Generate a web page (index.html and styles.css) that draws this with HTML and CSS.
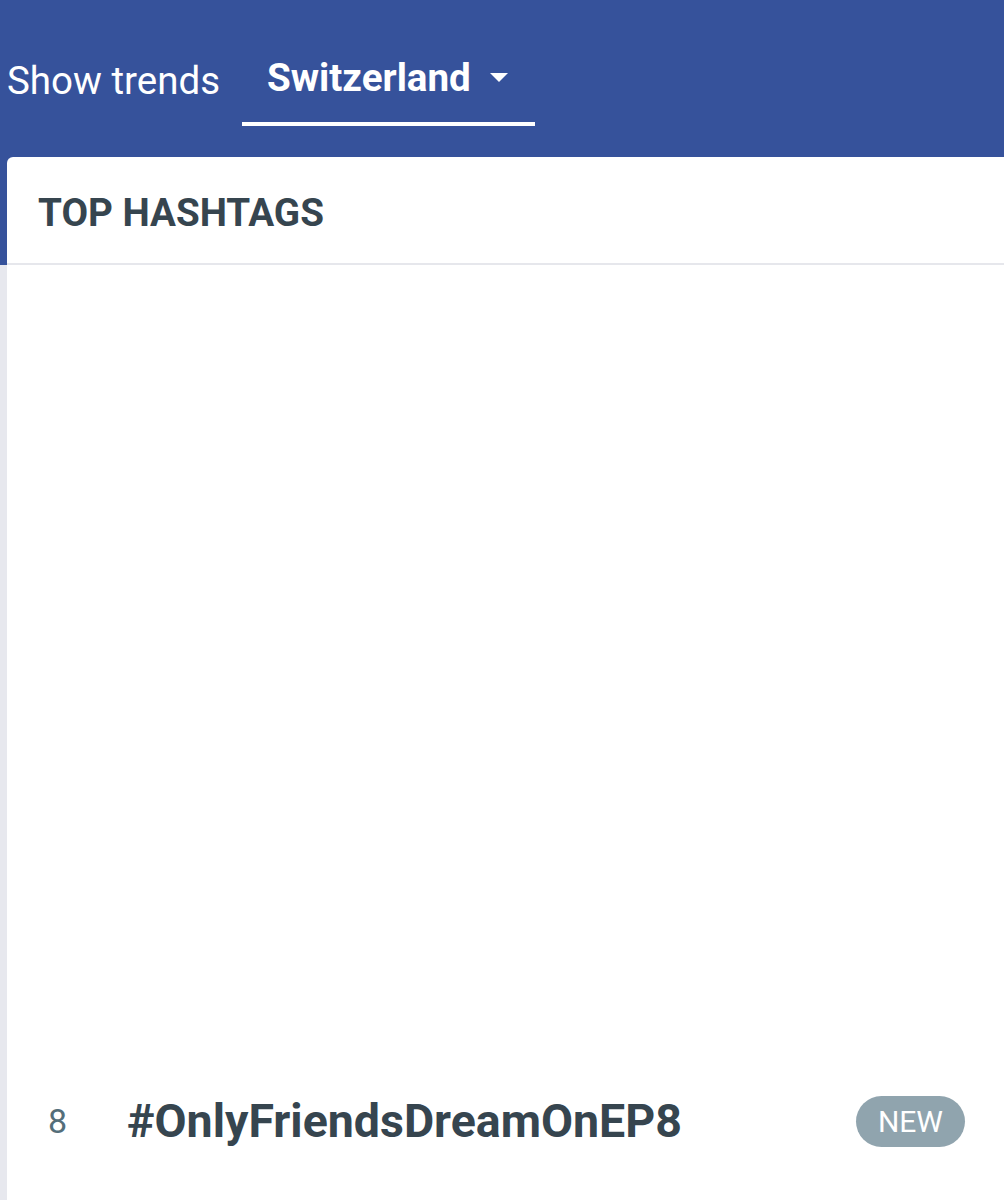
FILE: index.html
```html
<!DOCTYPE html>
<html>
<head>
<meta charset="utf-8">
<link rel="stylesheet" href="styles.css">
</head>
<body>
<div class="page">
  <header class="topbar">
    <div class="tabs">
      <span class="label">Show trends</span>
      <div class="tab active">
        <span class="tab-text">Switzerland</span>
        <svg class="caret" width="18" height="9" viewBox="0 0 18 9"><path d="M0 0 L18 0 L9 9 Z" fill="#ffffff"/></svg>
      </div>
    </div>
  </header>
  <main class="content">
    <section class="card">
      <div class="card-head">TOP HASHTAGS</div>
      <div class="card-body">
        <div class="spacer"></div>
        <div class="row">
          <span class="rank">8</span>
          <span class="tag">#OnlyFriendsDreamOnEP8</span>
          <span class="badge">NEW</span>
        </div>
      </div>
    </section>
  </main>
</div>
</body>
</html>
```
FILE: styles.css
```css
* { box-sizing: border-box; }
html, body { margin: 0; padding: 0; }
body {
  font-family: Roboto, "Noto Sans", sans-serif;
  background: #e7e8ee;
  width: 1004px;
  height: 1200px;
  overflow: hidden;
}
.page {
  position: relative;
  background: linear-gradient(#36529b 0, #36529b 265px, #e7e8ee 265px);
  height: 1200px;
}
.topbar {
  height: 157px;
  padding-top: 38px;
}
.tabs {
  display: flex;
  align-items: flex-start;
}
.label {
  color: #ffffff;
  font-size: 38.5px;
  line-height: 86px;
  padding-left: 7px;
  width: 242px;
  height: 88px;
}
.tab {
  width: 293px;
  height: 88px;
  border-bottom: 4px solid #ffffff;
  display: flex;
  align-items: flex-start;
  padding-left: 25px;
  gap: 19px;
}
.tab-text {
  color: #ffffff;
  font-weight: 700;
  font-size: 38.6px;
  line-height: 80px;
}
.caret {
  margin-top: 35px;
}
.content {
  padding-left: 7px;
}
.card {
  background: #ffffff;
  border-top-left-radius: 6px;
  height: 1043px;
}
.card-head {
  height: 108px;
  border-bottom: 2px solid #e6e7ec;
  padding-left: 31px;
  color: #36454f;
  font-weight: 700;
  font-size: 38.6px;
  line-height: 112px;
}
.card-body {
  display: flex;
  flex-direction: column;
}
.spacer { height: 830px; }
.row {
  display: flex;
  align-items: center;
  height: 52px;
  padding-left: 41px;
  padding-right: 39px;
}
.rank {
  color: #546e7a;
  font-size: 34px;
  width: 79px;
}
.tag {
  color: #36454f;
  font-weight: 700;
  font-size: 46.5px;
  flex: 1;
}
.badge {
  background: #90a4ae;
  color: #ffffff;
  font-size: 30px;
  height: 51px;
  line-height: 51px;
  padding: 0 22px;
  border-radius: 26px;
}
```
